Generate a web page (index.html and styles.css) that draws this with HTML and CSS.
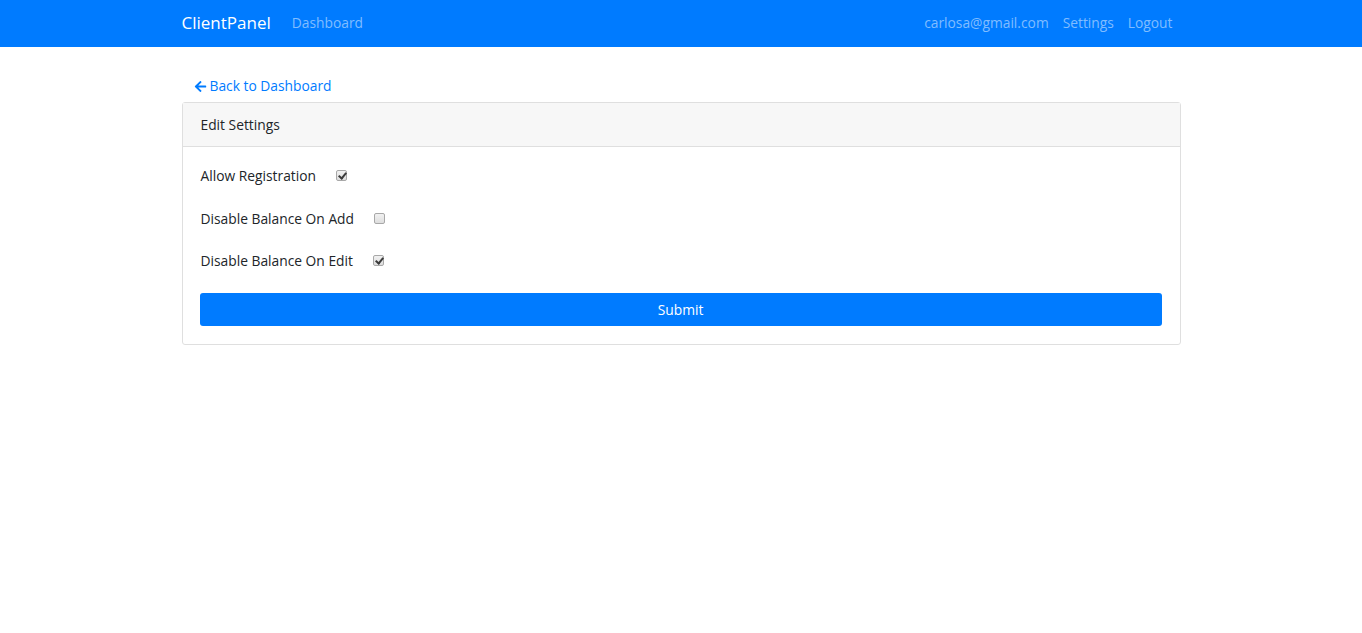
FILE: index.html
```html
<!DOCTYPE html>
<html lang="en">
<head>
    <meta charset="UTF-8">
    <meta name="viewport" content="width=device-width, initial-scale=1.0">
    <title>ClientPanel - Settings</title>
    <link rel="stylesheet" href="styles.css">
</head>
<body>
    <!-- Top navbar -->
    <nav class="navbar">
        <div class="container nav-inner">
            <div class="nav-left">
                <a href="#" class="brand">ClientPanel</a>
                <a href="#" class="nav-link">Dashboard</a>
            </div>
            <div class="nav-right">
                <a href="#" class="nav-link">carlosa@gmail.com</a>
                <a href="#" class="nav-link">Settings</a>
                <a href="#" class="nav-link">Logout</a>
            </div>
        </div>
    </nav>

    <div class="container page">
        <div class="back-row">
            <a href="#" class="back-link">
                <svg class="arrow" viewBox="0 0 448 512" width="13" height="13" aria-hidden="true">
                    <path fill="currentColor" d="M257.5 445.1l-22.2 22.2c-9.4 9.4-24.6 9.4-33.9 0L7 273c-9.4-9.4-9.4-24.6 0-33.9L201.4 44.7c9.4-9.4 24.6-9.4 33.9 0l22.2 22.2c9.5 9.5 9.3 25-.4 34.3L136.6 216H424c13.3 0 24 10.7 24 24v32c0 13.3-10.7 24-24 24H136.6l120.5 114.8c9.8 9.3 10 24.8.4 34.3z"/>
                </svg>
                Back to Dashboard
            </a>
        </div>

        <div class="card">
            <div class="card-header">Edit Settings</div>
            <div class="card-body">
                <form id="settingsForm">
                    <div class="form-group">
                        <label for="allowRegistration">Allow Registration</label>
                        <input type="checkbox" id="allowRegistration" checked>
                    </div>
                    <div class="form-group">
                        <label for="disableBalanceOnAdd">Disable Balance On Add</label>
                        <input type="checkbox" id="disableBalanceOnAdd">
                    </div>
                    <div class="form-group">
                        <label for="disableBalanceOnEdit">Disable Balance On Edit</label>
                        <input type="checkbox" id="disableBalanceOnEdit" checked>
                    </div>
                    <button type="button" class="btn-submit">Submit</button>
                </form>
            </div>
        </div>
    </div>
</body>
</html>
```

FILE: styles.css
```css
body {
    margin: 0;
    font-family: "Open Sans", "Noto Sans", Arial, sans-serif;
    font-size: 13.8px;
    color: #212529;
    background-color: #fff;
}
a {
    text-decoration: none;
}
.container {
    width: 999px;
    margin: 0 auto;
}
.navbar {
    background-color: #007bff;
    height: 47px;
}
.nav-inner {
    height: 100%;
    display: flex;
    justify-content: space-between;
    align-items: center;
    padding-bottom: 2px;
    box-sizing: border-box;
}
.nav-left, .nav-right {
    display: flex;
    align-items: center;
}
.brand {
    color: #fff;
    font-size: 17px;
    margin-right: 14px;
}
.nav-link {
    color: #80bdff;
    padding: 0 7px;
}
.nav-right {
    margin-right: 1px;
}
.page {
    padding-top: 28px;
}
.back-row {
    padding-left: 12px;
    height: 27px;
}
.back-link {
    color: #007bff;
    display: inline-flex;
    align-items: center;
    line-height: 22px;
}
.arrow {
    margin-right: 3px;
}
.card {
    border: 1px solid #dfdfdf;
    border-radius: 3px;
}
.card-header {
    background-color: #f7f7f7;
    border-bottom: 1px solid #dfdfdf;
    height: 43px;
    line-height: 43px;
    padding: 0 18px;
}
.card-body {
    padding: 18px 18px 18px 17px;
}
.form-group {
    height: 21px;
    display: flex;
    align-items: center;
    margin-bottom: 21.5px;
    padding-left: 1px;
}
.form-group label {
    margin-right: 20px;
    cursor: pointer;
}
input[type="checkbox"] {
    appearance: none;
    -webkit-appearance: none;
    width: 11px;
    height: 11px;
    margin: 0;
    border: 1px solid #a8a8a8;
    border-radius: 2px;
    background: linear-gradient(#f1f1f1, #dedede);
    position: relative;
    box-sizing: border-box;
}
input[type="checkbox"]:checked::after {
    content: "";
    position: absolute;
    left: 3px;
    top: 0px;
    width: 3px;
    height: 6px;
    border: solid #3a3a3a;
    border-width: 0 2px 2px 0;
    transform: rotate(40deg);
}
.btn-submit {
    display: block;
    width: 100%;
    height: 33px;
    background-color: #007bff;
    color: #fff;
    border: none;
    border-radius: 3px;
    font-family: inherit;
    font-size: 13.8px;
    cursor: pointer;
}
```
